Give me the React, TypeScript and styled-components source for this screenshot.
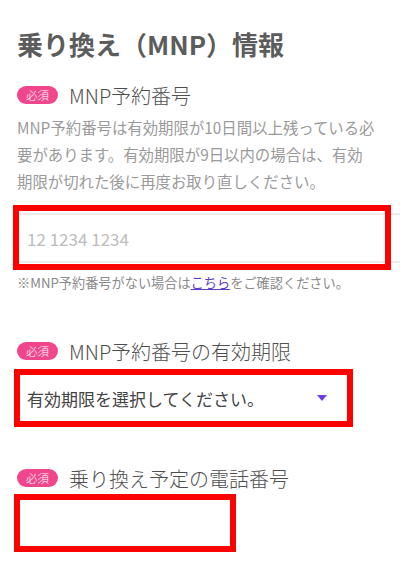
import React from 'react';
import styled, { createGlobalStyle } from 'styled-components';

const GlobalStyle = createGlobalStyle`
  html, body {
    margin: 0;
    padding: 0;
    background: #fff;
    overflow: hidden;
  }
  body {
    font-family: "Noto Sans CJK JP", "Noto Sans", sans-serif;
  }
`;

const Page = styled.div`
  width: 400px;
  height: 564px;
  box-sizing: border-box;
  padding: 26px 0 0 17px;
  overflow: hidden;
`;

const Title = styled.h1`
  margin: 0;
  font-size: 26px;
  line-height: 36px;
  font-weight: 700;
  color: #5c5c5c;
  white-space: nowrap;
`;

const LabelRow = styled.div<{ gap: number }>`
  margin-top: ${({ gap }) => gap}px;
  height: 28px;
  display: flex;
  align-items: center;
  gap: 11px;
`;

const Badge = styled.span`
  width: 41px;
  height: 18px;
  border-radius: 9px;
  background: #f0468c;
  color: #fff;
  font-size: 11.5px;
  font-weight: 300;
  line-height: 18px;
  text-align: center;
  flex-shrink: 0;
`;

const Label = styled.span`
  font-size: 20px;
  font-weight: 300;
  color: #4f4f4f;
  white-space: nowrap;
`;

const Description = styled.p`
  margin: 5px 0 0;
  width: 370px;
  font-size: 15.4px;
  line-height: 27px;
  color: #9a9a9a;
  white-space: nowrap;
`;

const Field = styled.div<{ gap: number }>`
  position: relative;
  margin-top: ${({ gap }) => gap}px;
`;

const Mark = styled.div<{ top: number; left: number; width: number; height: number }>`
  position: absolute;
  top: ${({ top }) => top}px;
  left: ${({ left }) => left}px;
  width: ${({ width }) => width}px;
  height: ${({ height }) => height}px;
  box-sizing: border-box;
  border: 6px solid #ff0000;
  pointer-events: none;
`;

const TextInput = styled.input`
  display: block;
  box-sizing: border-box;
  width: 420px;
  height: 50px;
  margin: 0;
  padding: 0 0 0 10px;
  border: none;
  border-top: 2px solid #ececec;
  border-bottom: 2px solid #ececec;
  font-family: inherit;
  font-size: 17px;
  color: #444;
  outline: none;
  &::placeholder {
    color: #bdbdbd;
  }
`;

const Note = styled.p`
  margin: 10px 0 0;
  font-size: 13.2px;
  line-height: 20px;
  color: #8a8a8a;
  white-space: nowrap;
`;

const NoteLink = styled.a`
  color: #5a3ec8;
  text-decoration: underline;
`;

const Select = styled.div`
  box-sizing: border-box;
  margin-left: 3px;
  width: 327px;
  height: 46px;
  display: flex;
  align-items: center;
  justify-content: space-between;
  padding: 0 20px 0 7px;
  background: #fff;
  border-radius: 3px;
  box-shadow: 0 1px 3px rgba(0, 0, 0, 0.16);
  font-size: 17px;
  color: #444;
`;

const Arrow = styled.span`
  width: 0;
  height: 0;
  border-left: 5px solid transparent;
  border-right: 5px solid transparent;
  border-top: 6px solid #6a3df0;
`;

const PhoneInput = styled.div`
  box-sizing: border-box;
  margin-left: 3px;
  width: 210px;
  height: 46px;
  background: #fff;
  border-radius: 3px;
  box-shadow: 0 1px 3px rgba(0, 0, 0, 0.12);
`;

const App: React.FC = () => (
  <>
    <GlobalStyle />
    <Page>
      <Title>乗り換え（MNP）情報</Title>

      <LabelRow gap={19}>
        <Badge>必須</Badge>
        <Label>MNP予約番号</Label>
      </LabelRow>
      <Description>
        MNP予約番号は有効期限が10日間以上残っている必
        <br />
        要があります。有効期限が9日以内の場合は、有効
        <br />
        期限が切れた後に再度お取り直しください。
      </Description>
      <Field gap={18}>
        <TextInput placeholder="12 1234 1234" />
        <Mark top={-8} left={-4} width={378} height={65} />
      </Field>
      <Note>
        ※MNP予約番号がない場合は<NoteLink href="#">こちら</NoteLink>をご確認ください。
      </Note>

      <LabelRow gap={44}>
        <Badge>必須</Badge>
        <Label>MNP予約番号の有効期限</Label>
      </LabelRow>
      <Field gap={10}>
        <Select>
          <span>有効期限を選択してください。</span>
          <Arrow />
        </Select>
        <Mark top={-6} left={-3} width={339} height={58} />
      </Field>

      <LabelRow gap={43}>
        <Badge>必須</Badge>
        <Label>乗り換え予定の電話番号</Label>
      </LabelRow>
      <Field gap={8}>
        <PhoneInput />
        <Mark top={-6} left={-3} width={222} height={58} />
      </Field>
    </Page>
  </>
);

export default App;
